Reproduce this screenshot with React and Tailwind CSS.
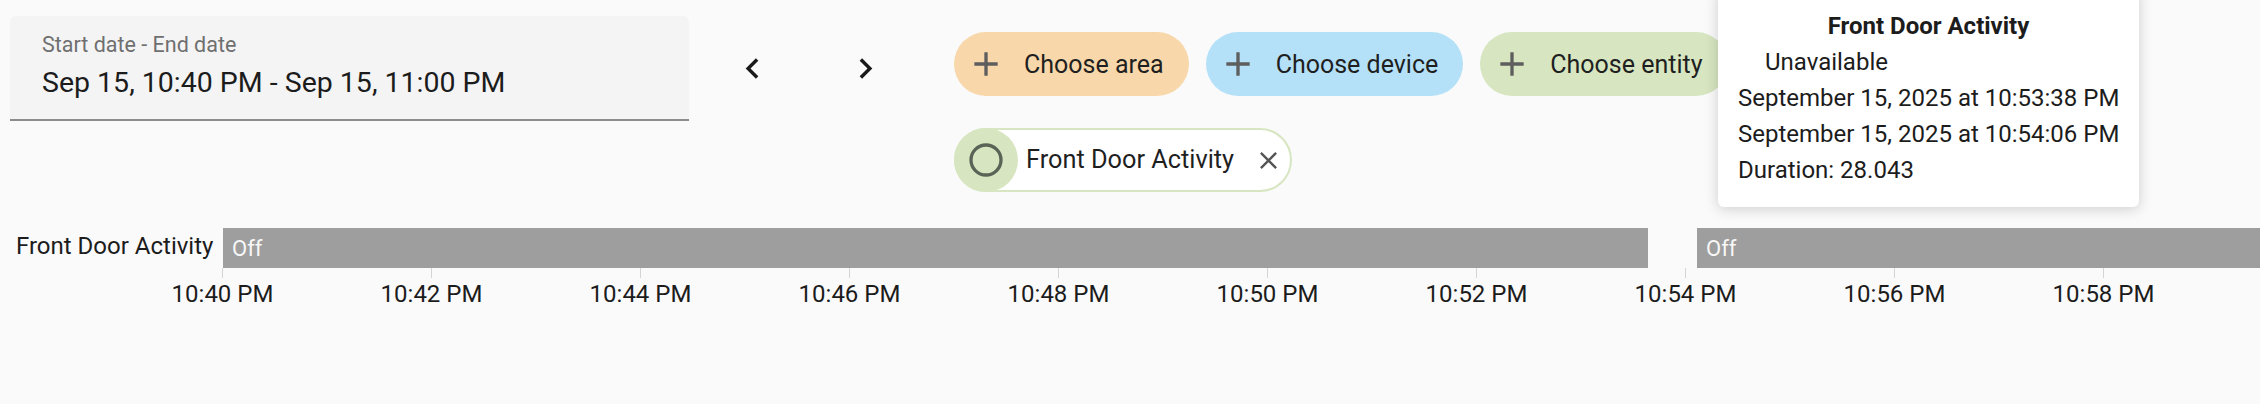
import React from "react";

const mdi = {
  left: "M15.41,16.58L10.83,12L15.41,7.41L14,6L8,12L14,18L15.41,16.58Z",
  right: "M8.59,16.58L13.17,12L8.59,7.41L10,6L16,12L10,18L8.59,16.58Z",
  plus: "M19,13H13V19H11V13H5V11H11V5H13V11H19V13Z",
  close:
    "M19,6.41L17.59,5L12,10.59L6.41,5L5,6.41L10.59,12L5,17.59L6.41,19L12,13.41L17.59,19L19,17.59L13.41,12L19,6.41Z",
  circle:
    "M12,20A8,8 0 0,1 4,12A8,8 0 0,1 12,4A8,8 0 0,1 20,12A8,8 0 0,1 12,20M12,2A10,10 0 0,0 2,12A10,10 0 0,0 12,22A10,10 0 0,0 22,12A10,10 0 0,0 12,2Z",
};

const Icon = ({ d, size = 40, className = "" }) => (
  <svg width={size} height={size} viewBox="0 0 24 24" className={className}>
    <path d={d} fill="currentColor" />
  </svg>
);

const addChips = [
  { label: "Choose area", bg: "bg-[#f8d8ab]" },
  { label: "Choose device", bg: "bg-[#b5e1f8]" },
  { label: "Choose entity", bg: "bg-[#d7e6c1]" },
];

const ticks = ["10:40 PM", "10:42 PM", "10:44 PM", "10:46 PM", "10:48 PM", "10:50 PM", "10:52 PM", "10:54 PM", "10:56 PM", "10:58 PM"];

export default function App() {
  return (
    <div className="relative h-[404px] w-[2260px] overflow-hidden bg-[#fafafa] font-['Roboto','Liberation_Sans',sans-serif] text-[#1f1f1f]">
      {/* top controls */}
      <div className="flex items-start pl-[10px] pt-[16px]">
        <div className="h-[105px] w-[679px] rounded-t-[6px] border-b-2 border-[#8c8c8c] bg-[#f4f4f4] pl-[32px] pt-[14px]">
          <div className="text-[21.5px] leading-[30px] text-[#6f6f6f]">Start date - End date</div>
          <div className="mt-[5px] text-[28.5px] leading-[36px] text-[#1c1c1c]">Sep 15, 10:40 PM - Sep 15, 11:00 PM</div>
        </div>

        <div className="ml-[31px] flex h-[105px] items-center gap-[49px]">
          <button className="flex h-[64px] w-[64px] items-center justify-center text-[#1a1a1a]">
            <Icon d={mdi.left} size={41} />
          </button>
          <button className="flex h-[64px] w-[64px] items-center justify-center text-[#1a1a1a]">
            <Icon d={mdi.right} size={41} />
          </button>
        </div>

        <div className="ml-[57px] mt-[16px] flex flex-col gap-[32px]">
          <div className="flex gap-[17px]">
            {addChips.map((c) => (
              <div key={c.label} className={`flex h-[64px] items-center whitespace-nowrap rounded-full pl-[12px] pr-[25px] ${c.bg}`}>
                <Icon d={mdi.plus} size={40} className="text-[#5e5e5e]" />
                <span className="ml-[18px] text-[25px] leading-none">{c.label}</span>
              </div>
            ))}
          </div>
          <div className="flex">
            <div className="flex h-[64px] items-center rounded-full border-2 border-[#d7e6c1] bg-white pr-[7px]">
              <div className="-ml-[2px] flex h-[64px] w-[64px] items-center justify-center rounded-full bg-[#d7e6c1]">
                <Icon d={mdi.circle} size={40} className="text-[#5b6356]" />
              </div>
              <span className="ml-[8px] whitespace-nowrap text-[25.3px] leading-none">Front Door Activity</span>
              <button className="ml-[20px] flex h-[29px] w-[29px] items-center justify-center text-[#555]">
                <Icon d={mdi.close} size={29} />
              </button>
            </div>
          </div>
        </div>
      </div>

      {/* timeline */}
      <div className="mt-[36px] flex h-[40px] items-center">
        <div className="w-[223px] whitespace-nowrap pb-[4px] pl-[16px] text-[24px] leading-none text-[#1c1c1c]">Front Door Activity</div>
        <div className="flex h-full flex-1">
          <div className="flex w-[1425px] items-center bg-[#9e9e9e] pl-[9px] text-[22px] text-[#f7f7f7]">Off</div>
          <div className="w-[49px]" />
          <div className="flex flex-1 items-center bg-[#9e9e9e] pl-[9px] text-[22px] text-[#f7f7f7]">Off</div>
        </div>
      </div>
      <div className="ml-[118px] flex">
        {ticks.map((t) => (
          <div key={t} className="flex w-[209px] shrink-0 flex-col items-center">
            <div className="h-[10px] w-px bg-[#d4d4d4]" />
            <div className="mt-[4px] whitespace-nowrap text-[24px] leading-[24px] text-[#1c1c1c]">{t}</div>
          </div>
        ))}
      </div>

      {/* hover tooltip */}
      <div className="absolute left-[1718px] top-[-12px] w-[421px] rounded-[6px] bg-white pb-[19px] pl-[20px] pt-[20px] text-[24px] leading-[36px] text-[#1c1c1c] shadow-[0_2px_14px_rgba(0,0,0,0.18)]">
        <div className="pr-[20px] text-center font-bold">Front Door Activity</div>
        <div className="ml-[27px]">Unavailable</div>
        <div className="whitespace-nowrap">September 15, 2025 at 10:53:38 PM</div>
        <div className="whitespace-nowrap">September 15, 2025 at 10:54:06 PM</div>
        <div>Duration: 28.043</div>
      </div>
    </div>
  );
}
